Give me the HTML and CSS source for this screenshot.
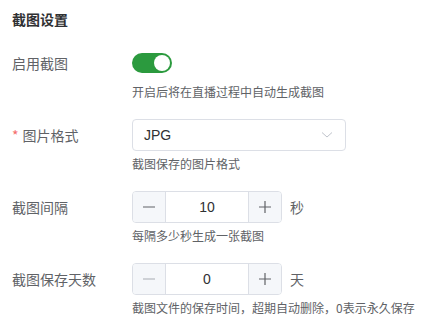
FILE: index.html
```html
<!DOCTYPE html>
<html lang="zh">
<head>
<meta charset="utf-8">
<link rel="stylesheet" href="styles.css">
</head>
<body>
<div class="panel">
  <div class="title">截图设置</div>

  <div class="item">
    <div class="label">启用截图</div>
    <div class="field">
      <div class="control">
        <div class="switch on"><span class="knob"></span></div>
      </div>
      <div class="hint">开启后将在直播过程中自动生成截图</div>
    </div>
  </div>

  <div class="item">
    <div class="label"><span class="req">*</span>图片格式</div>
    <div class="field">
      <div class="control">
        <div class="select">
          <span class="select-value">JPG</span>
          <svg class="chevron" width="12" height="8" viewBox="0 0 12 8"><path d="M1 1.5 L6 6 L11 1.5" fill="none" stroke="#c0c4cc" stroke-width="1"/></svg>
        </div>
      </div>
      <div class="hint">截图保存的图片格式</div>
    </div>
  </div>

  <div class="item">
    <div class="label">截图间隔</div>
    <div class="field">
      <div class="control">
        <div class="number">
          <span class="btn minus"><svg width="14" height="14" viewBox="0 0 14 14"><path d="M1 7 H13" stroke="#606266" stroke-width="1.2"/></svg></span>
          <span class="num">10</span>
          <span class="btn plus"><svg width="14" height="14" viewBox="0 0 14 14"><path d="M1 7 H13 M7 1 V13" stroke="#606266" stroke-width="1.2"/></svg></span>
        </div>
        <span class="unit">秒</span>
      </div>
      <div class="hint">每隔多少秒生成一张截图</div>
    </div>
  </div>

  <div class="item">
    <div class="label">截图保存天数</div>
    <div class="field">
      <div class="control">
        <div class="number">
          <span class="btn minus disabled"><svg width="14" height="14" viewBox="0 0 14 14"><path d="M1 7 H13" stroke="#a8abb2" stroke-width="1.2"/></svg></span>
          <span class="num">0</span>
          <span class="btn plus"><svg width="14" height="14" viewBox="0 0 14 14"><path d="M1 7 H13 M7 1 V13" stroke="#606266" stroke-width="1.2"/></svg></span>
        </div>
        <span class="unit">天</span>
      </div>
      <div class="hint">截图文件的保存时间，超期自动删除，0表示永久保存</div>
    </div>
  </div>
</div>
</body>
</html>
```

FILE: styles.css
```css
* { box-sizing: border-box; }
body {
  margin: 0;
  background: #fff;
  font-family: "Noto Sans CJK SC", "Liberation Sans", sans-serif;
  color: #606266;
}
.panel {
  padding: 8px 12px 0;
}
.title {
  font-size: 14px;
  font-weight: bold;
  color: #303133;
  line-height: 22px;
  margin-bottom: 17px;
}
.item {
  display: flex;
  margin-bottom: 18px;
}
.item:last-child { margin-bottom: 0; }
.label {
  width: 120px;
  flex: none;
  height: 32px;
  display: flex;
  align-items: center;
  font-size: 14px;
  color: #606266;
}
.req {
  color: #f56c6c;
  margin-right: 4px;
  font-size: 14px;
}
.field {
  display: flex;
  flex-direction: column;
  min-width: 0;
}
.control {
  height: 32px;
  display: flex;
  align-items: center;
}
.hint {
  margin-top: 4px;
  font-size: 12px;
  line-height: 18px;
  color: #606266;
  white-space: nowrap;
}
.switch {
  width: 40px;
  height: 20px;
  border-radius: 10px;
  background: #dcdfe6;
  position: relative;
}
.switch.on { background: #2b9a3e; }
.knob {
  position: absolute;
  top: 2px;
  left: 22px;
  width: 16px;
  height: 16px;
  border-radius: 50%;
  background: #fff;
}
.select {
  width: 214px;
  height: 32px;
  border: 1px solid #dcdfe6;
  border-radius: 4px;
  display: flex;
  align-items: center;
  justify-content: space-between;
  padding: 0 12px 0 11px;
}
.select-value {
  font-family: "Liberation Sans", sans-serif;
  font-size: 14px;
  color: #303133;
}
.number {
  width: 150px;
  height: 32px;
  border: 1px solid #dcdfe6;
  border-radius: 4px;
  display: flex;
  overflow: hidden;
}
.btn {
  width: 33px;
  flex: none;
  background: #f5f7fa;
  display: flex;
  align-items: center;
  justify-content: center;
}
.minus { border-right: 1px solid #dcdfe6; }
.plus { border-left: 1px solid #dcdfe6; }
.num {
  flex: 1;
  display: flex;
  align-items: center;
  justify-content: center;
  font-family: "Liberation Sans", sans-serif;
  font-size: 14px;
  color: #303133;
}
.unit {
  margin-left: 8px;
  font-size: 14px;
  color: #606266;
}
```
